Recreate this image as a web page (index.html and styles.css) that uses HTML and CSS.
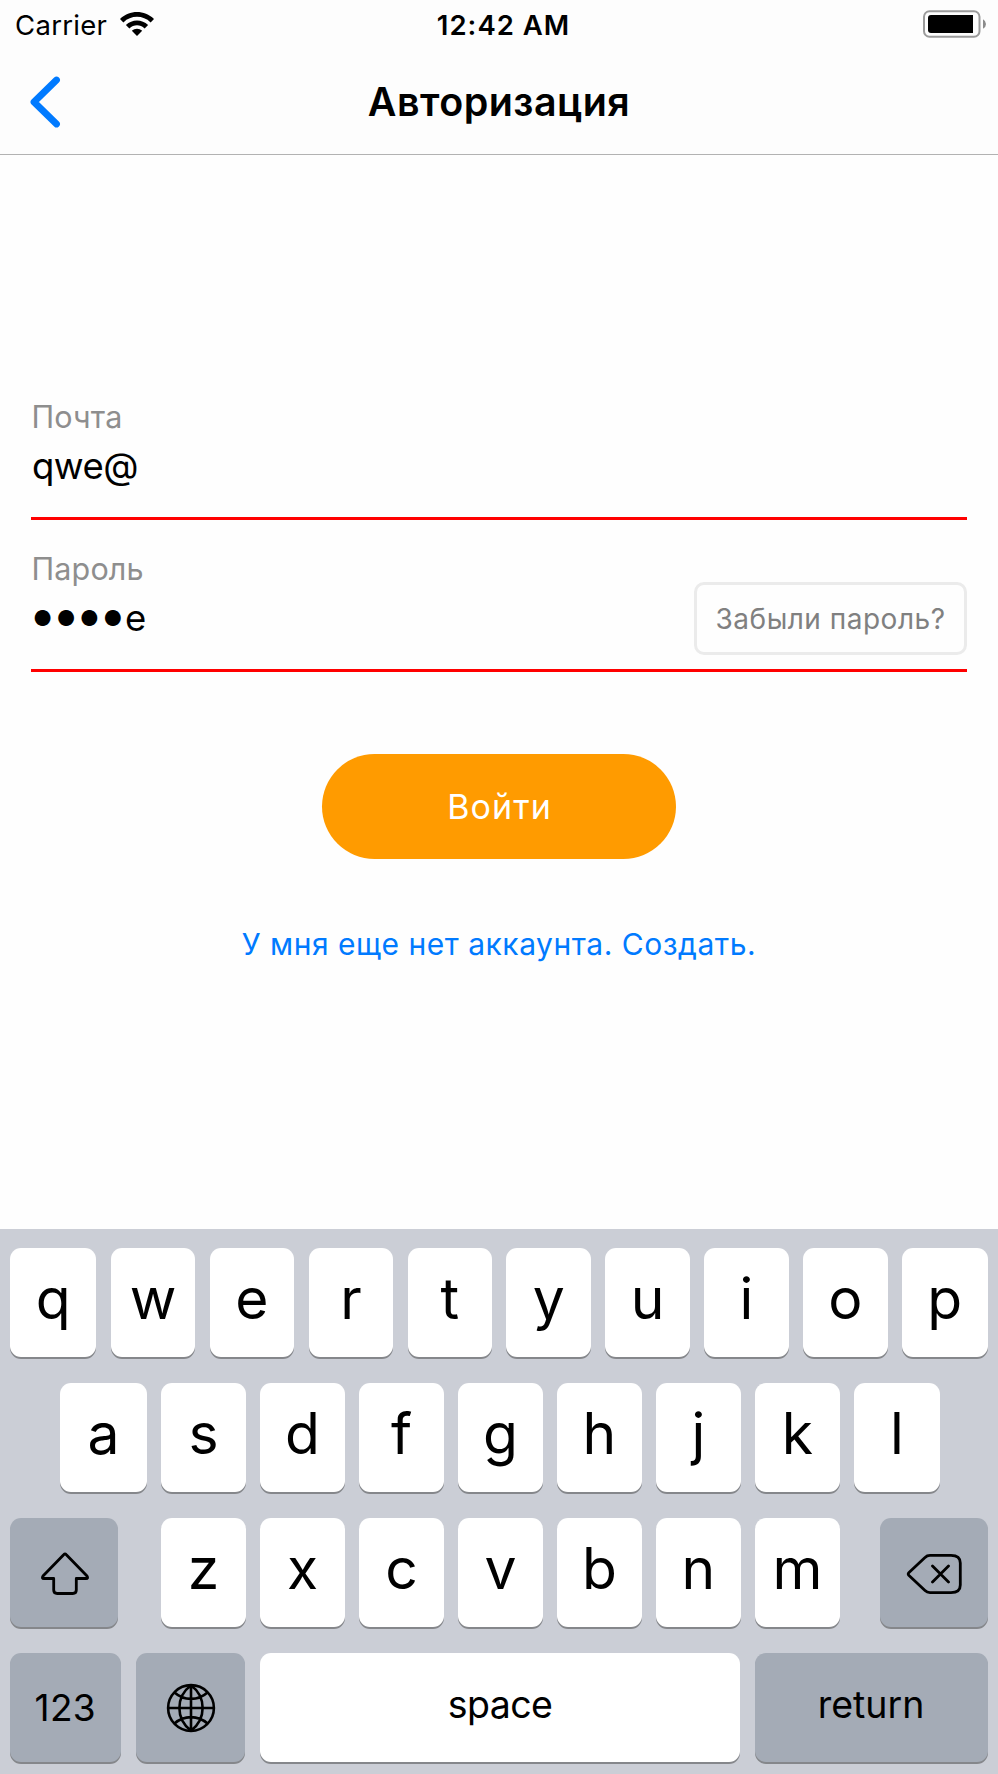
FILE: index.html
```html
<!DOCTYPE html>
<html lang="ru">
<head>
<meta charset="utf-8">
<title>Авторизация</title>
<link rel="stylesheet" href="styles.css">
</head>
<body>
<div class="screen">
  <header class="status">
    <div class="status-left">
      <span class="carrier">Carrier</span>
      <svg class="wifi" width="34" height="24" viewBox="0 0 34 24">
        <path d="M0 7C9.500-2.300 24.500-2.300 34 7L30.600 10.400C23 3 11 3 3.400 10.400Z"/>
        <path d="M5.900 13.100C12 6.900 22 6.900 28.100 13.100L24.600 16.500C20.200 12.300 13.800 12.300 9.400 16.500Z"/>
        <path d="M11.800 18.700C14.700 16 19.300 16 22.200 18.700L17 23.900Z"/>
      </svg>
    </div>
    <span class="clock">12:42 AM</span>
    <svg class="battery" width="64" height="28" viewBox="0 0 64 28">
      <rect x="1" y="1.300" width="55.500" height="25.400" rx="5.500" fill="none" stroke="#9b9b9b" stroke-width="2"/>
      <path d="M8 5H50V23H8Q5 23 5 20V8Q5 5 8 5Z" fill="#000"/>
      <path d="M60 9.300Q63 11 63 14T60 18.700Z" fill="#8b8b8b"/>
    </svg>
  </header>
  <nav class="nav">
    <svg class="back" width="31" height="52" viewBox="0 0 31 52"><path d="M26.500 4 4 26 26.500 48" fill="none" stroke="#007aff" stroke-width="6.800" stroke-linecap="round" stroke-linejoin="round"/></svg>
    <h1 class="title">Авторизация</h1>
  </nav>
  <main class="content">
    <div class="field">
      <label class="label">Почта</label>
      <div class="value">qwe@</div>
    </div>
    <div class="field">
      <label class="label">Пароль</label>
      <div class="value-row">
        <div class="value"><span class="dots">●●●●</span>e</div>
        <button class="forgot">Забыли пароль?</button>
      </div>
    </div>
    <button class="login">Войти</button>
    <a class="signup">У мня еще нет аккаунта. Создать.</a>
  </main>
  <section class="keyboard">
    <div class="row row-one">
      <span class="key edge">q</span><span class="key">w</span><span class="key">e</span><span class="key">r</span><span class="key">t</span><span class="key">y</span><span class="key">u</span><span class="key">i</span><span class="key">o</span><span class="key last">p</span>
    </div>
    <div class="row row-two">
      <span class="key edge">a</span><span class="key">s</span><span class="key">d</span><span class="key">f</span><span class="key">g</span><span class="key">h</span><span class="key">j</span><span class="key">k</span><span class="key last">l</span>
    </div>
    <div class="row row-three">
      <span class="key dark shift arrow"><svg width="50" height="44" viewBox="0 0 50 44"><path d="M23.900 2.500Q25 1.300 26.100 2.500L47 24Q48.600 26.500 46 26.500H36.300V38Q36.300 41.500 32.800 41.500H17.200Q13.700 41.500 13.700 38V26.500H4Q1.400 26.500 3 24Z" fill="none" stroke="#000" stroke-width="2.800" stroke-linejoin="round"/></svg></span>
      <div class="letters"><span class="key">z</span><span class="key">x</span><span class="key">c</span><span class="key">v</span><span class="key">b</span><span class="key">n</span><span class="key">m</span></div>
      <span class="key dark shift"><svg width="56" height="42" viewBox="0 0 56 42"><path d="M24 2.400H45Q54.300 2.400 54.300 10V32Q54.300 39.600 45 39.600H24Q21 39.600 19 37.600L3 22.500Q1.500 21 3 19.500L19 4.400Q21 2.400 24 2.400ZM26.500 13 42.500 29M42.500 13 26.500 29" fill="none" stroke="#000" stroke-width="2.800" stroke-linecap="round" stroke-linejoin="round"/></svg></span>
    </div>
    <div class="row row-four">
      <span class="key dark num">123</span>
      <span class="key dark globe"><svg width="50" height="50" viewBox="0 0 50 50"><g fill="none" stroke="#000" stroke-width="2.600"><circle cx="25" cy="25" r="22.900"/><path d="M25 2V48M2 25H48M25 2.300C9.500 14 9.500 36 25 47.700M25 2.300C40.500 14 40.500 36 25 47.700M8.500 9.500C18 18 32 18 41.500 9.500M8.500 40.500C18 32 32 32 41.500 40.500"/></g></svg></span>
      <span class="key space">space</span>
      <span class="key dark return">return</span>
    </div>
  </section>
</div>
</body>
</html>
```
FILE: styles.css
```css
* { box-sizing: border-box; }
body {
  margin: 0;
  background: #fefefe;
  color: #000;
  font-family: Inter, "Liberation Sans", sans-serif;
}
button { font: inherit; background: none; border: 0; padding: 0; }
svg { display: block; flex: none; }
.screen { width: 998px; height: 1774px; display: flex; flex-direction: column; overflow: hidden; }

.status {
  height: 50px;
  display: grid;
  grid-template-columns: 1fr auto 1fr;
  align-items: center;
  padding: 0 11px 0 15px;
  background: #fdfdfd;
  font-size: 27.5px;
  line-height: 50px;
}
.status-left { display: flex; align-items: center; gap: 12.500px; }
.carrier { letter-spacing: 0.3px; }
.wifi { margin-top: -2px; }
.clock { font-weight: 600; letter-spacing: 1px; padding-left: 5px; }
.battery { justify-self: end; margin-top: -2px; }

.nav {
  height: 105px;
  display: grid;
  grid-template-columns: 31px 1fr 31px;
  align-items: center;
  padding: 0 30px;
  background: #fdfdfd;
  border-bottom: 1px solid #b2b2b2;
}
.title { margin: 0; text-align: center; font-size: 39.4px; font-weight: 600; line-height: 60px; letter-spacing: 0.5px; }

.content { flex: 1; display: flex; flex-direction: column; padding: 244px 31px 0; }
.field { height: 121px; border-bottom: 3px solid #f00; margin-bottom: 31px; }
.label { display: block; color: #8e8e8e; font-size: 30.5px; line-height: 36px; padding-left: 0.5px; letter-spacing: 0.15px; }
.value { font-size: 36.5px; line-height: 48px; padding: 7px 0 0 1px; white-space: nowrap; letter-spacing: -0.5px; }
.dots { display: inline-block; font-size: 21px; line-height: 20px; letter-spacing: 4.2px; transform: translateY(-5px); padding-left: 1px; margin-right: -1.5px; }
.value-row { display: flex; justify-content: space-between; align-items: flex-start; }
.forgot {
  width: 273px;
  height: 73px;
  margin-top: -5px;
  border: 3px solid #ebebeb;
  border-radius: 10px;
  color: #808080;
  font-size: 28px;
  letter-spacing: 0.5px;
  white-space: nowrap;
}
.login {
  align-self: center;
  width: 354px;
  height: 105px;
  margin-top: 51px;
  border-radius: 53px;
  background: #ff9b00;
  color: #fff;
  font-size: 34px;
  letter-spacing: 1.1px;
  padding-left: 1px;
}
.signup { align-self: center; margin-top: 67px; color: #007aff; font-size: 30px; line-height: 36px; letter-spacing: 0.53px; white-space: nowrap; }

.keyboard { height: 545px; padding: 19px 10px 0; background: #cbced6; display: flex; flex-direction: column; gap: 26px; }
.row { display: flex; height: 109px; gap: 14.600px; }
.row-one { gap: 14.500px; }
.key {
  flex: none;
  width: 84.400px;
  height: 109px;
  display: flex;
  align-items: center;
  justify-content: center;
  padding-bottom: 9px;
  border-radius: 11px;
  background: #fff;
  box-shadow: 0 2px 0 #85878b;
  font-size: 57px;
  font-weight: 400;
}
.edge { width: 86.400px; }
.row-two { padding-left: 50.300px; }
.last { width: 85.500px; }
.row-three { justify-content: space-between; }
.letters { display: flex; gap: 14.600px; margin-left: 3px; }
.dark { background: #a4abb6; }
.shift { width: 108px; padding: 3px 0 0; }
.arrow { padding-left: 2px; }
.num { width: 110.500px; margin-right: 0.800px; padding: 0; font-size: 37px; letter-spacing: 0.3px; }
.globe { width: 109.500px; padding: 0; }
.space { width: 480px; padding-bottom: 7px; font-size: 37.500px; letter-spacing: -0.6px; }
.return { width: 233px; padding-bottom: 7px; font-size: 37.500px; }
```
